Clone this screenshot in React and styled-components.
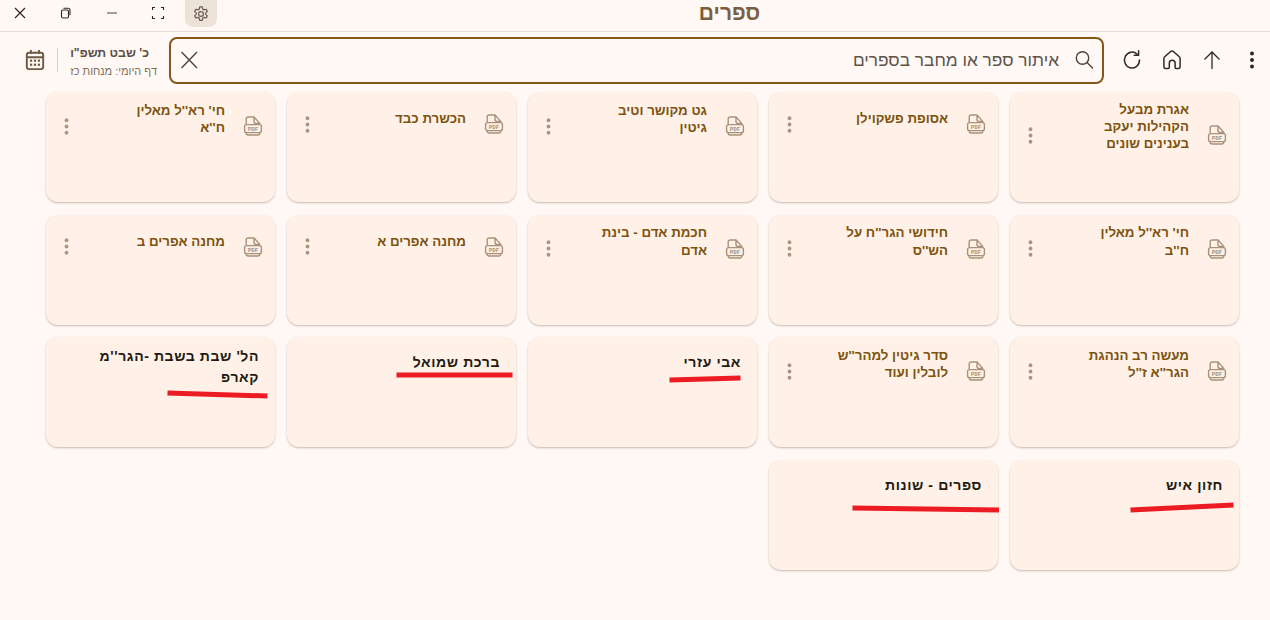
import React from 'react'
import styled, { createGlobalStyle } from 'styled-components'

const GlobalStyle = createGlobalStyle`
  html, body {
    margin: 0;
    padding: 0;
    height: 100%;
    background: #fff8f5;
  }
  body {
    font-family: "Liberation Sans", "Noto Sans", sans-serif;
    overflow: hidden;
  }
`

const Page = styled.div`
  width: 1270px;
  height: 620px;
  display: flex;
  flex-direction: column;
  background: #fff8f5;
`

const TitleBar = styled.div`
  height: 31px;
  flex: none;
  display: flex;
  align-items: flex-start;
  border-bottom: 1px solid #e6dcd3;
`

const WinButton = styled.div`
  width: 46px;
  height: 25px;
  display: flex;
  align-items: center;
  justify-content: center;
  color: #2d2620;
  &:first-child {
    margin-left: -3px;
  }
`

const GearButton = styled.div`
  width: 32px;
  height: 27px;
  margin-left: 4px;
  display: flex;
  align-items: center;
  justify-content: center;
  color: #6b5f55;
  background: #ece2d8;
  border-radius: 0 0 8px 8px;
`

const Title = styled.div`
  width: 1025px;
  text-align: center;
  font-size: 21px;
  line-height: 25px;
  font-weight: 700;
  color: #7a5f43;
  direction: rtl;
`

const Toolbar = styled.div`
  height: 56px;
  flex: none;
  display: flex;
  align-items: center;
  gap: 4px;
  direction: rtl;
  padding: 0 0 0 17px;
`

const ToolButton = styled.div`
  width: 36px;
  height: 40px;
  flex: none;
  display: flex;
  align-items: center;
  justify-content: center;
  color: #2f2a25;
`

const SearchBox = styled.div`
  flex: 1;
  height: 47px;
  box-sizing: border-box;
  margin-right: 6px;
  border: 2px solid #85581a;
  border-radius: 8px;
  display: flex;
  align-items: center;
  padding: 0 6px 0 6px;
  color: #4e453c;
`

const SearchText = styled.div`
  flex: 1;
  font-size: 17.3px;
  padding-right: 13px;
  color: #5d544b;
`

const DayInfo = styled.div`
  width: 108px;
  height: 24px;
  flex: none;
  box-sizing: border-box;
  padding: 4px 8px 0 0;
  display: flex;
  flex-direction: column;
  justify-content: center;
  gap: 4px;
  border-left: 1px solid #ddd2c7;
  white-space: nowrap;
`

const DayDate = styled.div`
  font-size: 12.3px;
  font-weight: 700;
  color: #5c5044;
  padding-right: 8px;
`

const DayPage = styled.div`
  font-size: 11px;
  line-height: 14px;
  color: #7c6f63;
`

const CalendarIcon = styled.div`
  width: 36px;
  flex: none;
  display: flex;
  justify-content: center;
  color: #6e5a43;
`

const Grid = styled.div`
  direction: rtl;
  display: grid;
  grid-template-columns: repeat(5, 229.5px);
  grid-auto-rows: 110px;
  column-gap: 11.5px;
  row-gap: 12.5px;
  padding: 4px 31px 0 0;
`

const Card = styled.div`
  position: relative;
  box-sizing: border-box;
  background: #fff1e7;
  border-radius: 12px;
  box-shadow: 0 1px 2px rgba(70, 45, 20, 0.3);
  display: flex;
  align-items: flex-start;
  padding: ${p => (p.$plain ? '0 16px' : '0 8px 0 8px')};
`

const PdfSlot = styled.div`
  width: 26px;
  height: ${p => p.$centre * 2}px;
  flex: none;
  display: flex;
  align-items: center;
  justify-content: center;
  margin: 0 1px 0 15px;
  color: #a8927a;
`

const CardTitle = styled.div`
  flex: 1;
  font-size: 13.3px;
  line-height: ${p => p.$leading}px;
  font-weight: 700;
  color: #7c5310;
  padding-top: ${p => p.$top}px;
`

const PlainTitle = styled.div`
  flex: 1;
  font-size: 14px;
  line-height: 21px;
  font-weight: 700;
  letter-spacing: 0.6px;
  color: #221a10;
  padding-top: ${p => p.$top}px;
`

const CardMenu = styled.div`
  width: 25px;
  height: ${p => p.$centre * 2}px;
  flex: none;
  display: flex;
  align-items: center;
  justify-content: center;
  color: #a89683;
`

const Scribble = styled.svg`
  position: absolute;
  overflow: visible;
  left: 0;
  top: 0;
  pointer-events: none;
`

const Dots = ({ size = 24 }) => (
  <svg width={size} height={size} viewBox="0 0 24 24" fill="currentColor">
    <circle cx="12" cy="5.5" r="2" />
    <circle cx="12" cy="12" r="2" />
    <circle cx="12" cy="18.5" r="2" />
  </svg>
)

const PdfIcon = () => (
  <svg width="22" height="22" viewBox="0 0 22 22" fill="none" stroke="currentColor" strokeWidth="1.4">
    <path d="M4.2 9V4a2 2 0 0 1 2-2h5.8l5.8 6.4V9M12 2v4.4a2 2 0 0 0 2 2h3.8M4.2 17.5V18a2 2 0 0 0 2 2h9.6a2 2 0 0 0 2-2v-.5" />
    <rect x="2.6" y="9.6" width="16.8" height="8" rx="1.8" />
    <text x="11" y="15.7" textAnchor="middle" fontSize="5.8" fontWeight="700" fontFamily="Liberation Mono, monospace" fill="currentColor" stroke="none">PDF</text>
  </svg>
)

const Gear = () => (
  <svg width="18" height="18" viewBox="0 0 24 24" fill="none" stroke="currentColor" strokeWidth="1.6" strokeLinejoin="round">
    <path d="M10.3 2.6h3.4l.6 2.9 1.7 1 2.8-.9 1.7 2.9-2.2 2v2l2.2 2-1.7 2.9-2.8-.9-1.7 1-.6 2.9h-3.4l-.6-2.9-1.7-1-2.8.9-1.7-2.9 2.2-2v-2l-2.2-2 1.7-2.9 2.8.9 1.7-1z" />
    <circle cx="12" cy="12" r="3.2" />
  </svg>
)

// vertical place of icon centre and of the first line, by number of title lines
const tileCentre = { 1: 32, 2: 34, 3: 43 }
const tileTop = { 1: 18, 2: 9.5, 3: 8.5 }
const tileLeading = { 1: 17.7, 2: 17.7, 3: 17.4 }

const books = [
  { title: ['אגרת מבעל', 'הקהילות יעקב', 'בענינים שונים'] },
  { title: ['אסופת פשקוילן'] },
  { title: ['גט מקושר וטיב', 'גיטין'] },
  { title: ['הכשרת כבד'] },
  { title: ["חי' רא''ל מאלין", "ח''א"] },
  { title: ["חי' רא''ל מאלין", "ח''ב"] },
  { title: ["חידושי הגר''ח על", "הש''ס"] },
  { title: ['חכמת אדם - בינת', 'אדם'] },
  { title: ['מחנה אפרים א'] },
  { title: ['מחנה אפרים ב'] },
  { title: ['מעשה רב הנהגת', "הגר''א ז''ל"] },
  { title: ["סדר גיטין למהר''ש", 'לובלין ועוד'] },
  { title: ['אבי עזרי'], plain: true, line: [141.5, 43, 212.5, 41] },
  { title: ['ברכת שמואל'], plain: true, line: [109.5, 38, 225.5, 38] },
  { title: ["הל' שבת בשבת -הגר''מ", 'קארפ'], plain: true, line: [121.5, 56, 221.5, 59] },
  { title: ['חזון איש'], plain: true, line: [120.5, 50, 223.5, 45] },
  { title: ['ספרים - שונות'], plain: true, line: [83.5, 48, 230, 50] },
  { empty: true },
  { empty: true },
  { empty: true },
]

function BookCard({ book }) {
  if (book.empty) return <div />
  if (book.plain) {
    return (
      <Card $plain>
        <PlainTitle $top={book.title.length === 1 ? 15 : 8.5}>
          {book.title.map(t => <div key={t}>{t}</div>)}
        </PlainTitle>
        <Scribble width="230" height="110">
          <line
            x1={book.line[0]}
            y1={book.line[1]}
            x2={book.line[2]}
            y2={book.line[3]}
            stroke="#ec1c24"
            strokeWidth="5"
          />
        </Scribble>
      </Card>
    )
  }
  const lines = book.title.length
  return (
    <Card>
      <PdfSlot $centre={tileCentre[lines]}><PdfIcon /></PdfSlot>
      <CardTitle $top={tileTop[lines]} $leading={tileLeading[lines]}>
        {book.title.map(t => <div key={t}>{t}</div>)}
      </CardTitle>
      <CardMenu $centre={tileCentre[lines]}><Dots size={23} /></CardMenu>
    </Card>
  )
}

export default function App() {
  return (
    <Page>
      <GlobalStyle />
      <TitleBar>
        <WinButton>
          <svg width="14" height="14" viewBox="0 0 14 14" stroke="currentColor" strokeWidth="1.2"><path d="M2 2l10 10M12 2L2 12" /></svg>
        </WinButton>
        <WinButton>
          <svg width="12" height="12" viewBox="0 0 12 12" fill="none" stroke="currentColor" strokeWidth="1.1"><rect x="1.5" y="3" width="7" height="8" rx="1.5" /><path d="M3.5 1.2h4.5a2 2 0 0 1 2 2v5" /></svg>
        </WinButton>
        <WinButton>
          <svg width="12" height="12" viewBox="0 0 12 12" stroke="#7d7670" strokeWidth="1.4"><path d="M1 6h10" /></svg>
        </WinButton>
        <WinButton>
          <svg width="14" height="14" viewBox="0 0 14 14" fill="none" stroke="currentColor" strokeWidth="1.1"><path d="M1.5 4V1.5H4M10 1.5h2.5V4M12.5 10v2.5H10M4 12.5H1.5V10" /></svg>
        </WinButton>
        <GearButton><Gear /></GearButton>
        <Title>ספרים</Title>
      </TitleBar>
      <Toolbar>
        <ToolButton>
          <Dots />
        </ToolButton>
        <ToolButton>
          <svg width="24" height="24" viewBox="0 0 24 24" fill="none" stroke="currentColor" strokeWidth="1.3"><path d="M12 21V4M4.5 11.5L12 4l7.5 7.5" /></svg>
        </ToolButton>
        <ToolButton>
          <svg width="24" height="24" viewBox="0 0 24 24" fill="none" stroke="currentColor" strokeWidth="1.5" strokeLinejoin="round"><path d="M10.4 3.7a2.4 2.4 0 0 1 3.2 0l5.7 5.1a2.4 2.4 0 0 1 .8 1.8V19a1.6 1.6 0 0 1-1.6 1.6h-2.4a1 1 0 0 1-1-1v-4.4a2.9 2.9 0 0 0-5.8 0v4.4a1 1 0 0 1-1 1H5.5A1.6 1.6 0 0 1 3.9 19v-8.4a2.4 2.4 0 0 1 .8-1.8z" /></svg>
        </ToolButton>
        <ToolButton>
          <svg width="24" height="24" viewBox="0 0 24 24" fill="none" stroke="currentColor" strokeWidth="1.5" strokeLinecap="round"><path d="M19.5 12a7.5 8 0 1 1-2.3-5.7" /><path d="M18.6 2.8v4.4h-4.4" strokeLinejoin="round" /></svg>
        </ToolButton>
        <SearchBox>
          <svg width="24" height="24" viewBox="0 0 24 24" fill="none" stroke="currentColor" strokeWidth="1.4"><circle cx="10.5" cy="10" r="6.2" /><path d="M15 14.5l6 6" /></svg>
          <SearchText>איתור ספר או מחבר בספרים</SearchText>
          <svg width="24" height="24" viewBox="0 0 24 24" fill="none" stroke="currentColor" strokeWidth="1.4"><path d="M4.5 4l15.5 16M20 4L4.5 20" /></svg>
        </SearchBox>
        <DayInfo>
          <DayDate>כ' שבט תשפ"ו</DayDate>
          <DayPage>דף היומי: מנחות כז</DayPage>
        </DayInfo>
        <CalendarIcon>
          <svg width="20" height="22" viewBox="0 0 22 24" fill="none" stroke="currentColor" strokeWidth="2.1"><rect x="2" y="4" width="18" height="18" rx="2.5" /><path d="M2 9h18M6.5 1v4M15.5 1v4" /><g fill="currentColor" stroke="none"><rect x="5.5" y="11.5" width="2.4" height="2.4" /><rect x="9.8" y="11.5" width="2.4" height="2.4" /><rect x="14.1" y="11.5" width="2.4" height="2.4" /><rect x="5.5" y="16" width="2.4" height="2.4" /><rect x="9.8" y="16" width="2.4" height="2.4" /><rect x="14.1" y="16" width="2.4" height="2.4" /></g></svg>
        </CalendarIcon>
      </Toolbar>
      <Grid>
        {books.map((b, i) => <BookCard key={i} book={b} />)}
      </Grid>
    </Page>
  )
}
